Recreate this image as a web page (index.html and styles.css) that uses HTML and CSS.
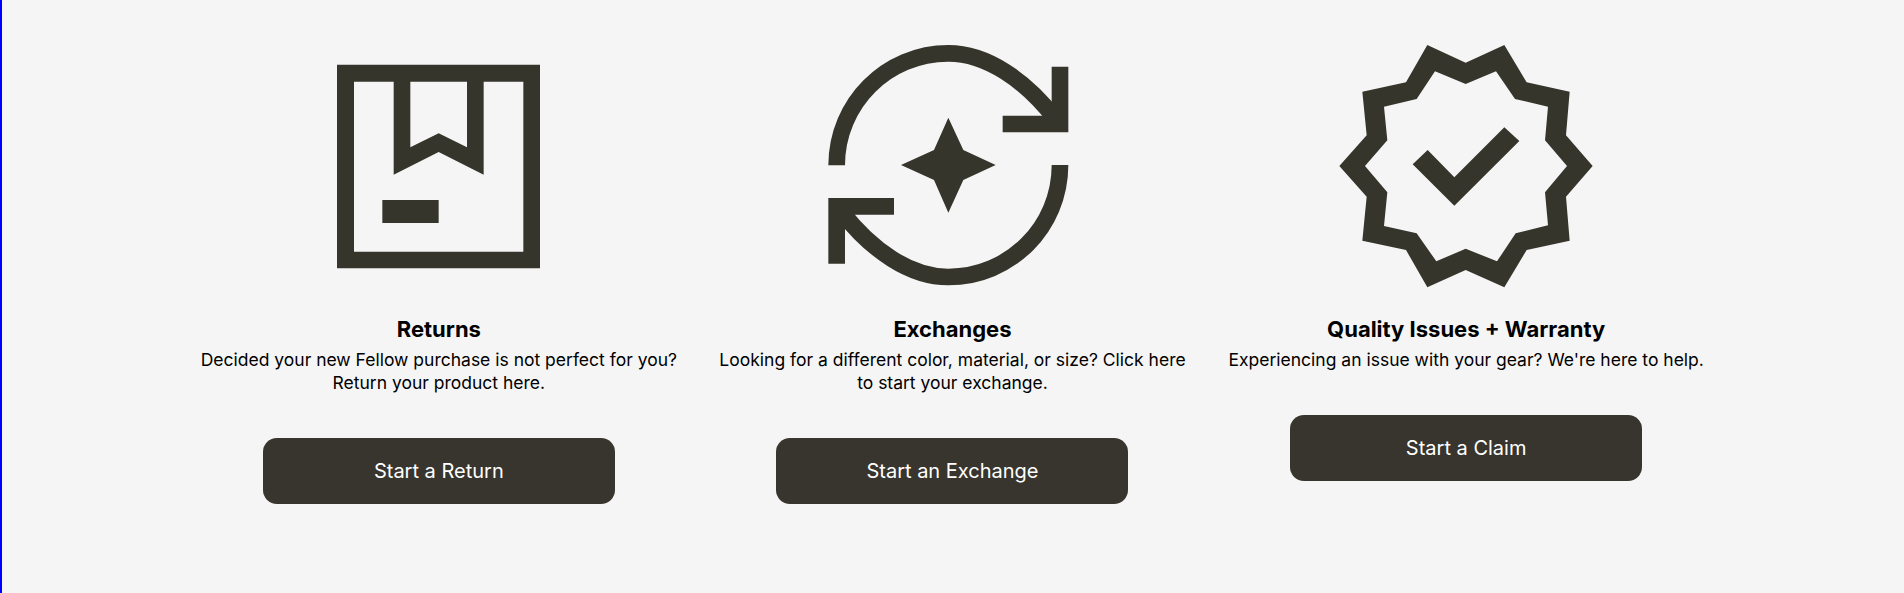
FILE: index.html
```html
<!DOCTYPE html>
<html lang="en">
<head>
    <meta charset="UTF-8">
    <meta name="viewport" content="width=device-width, initial-scale=1.0">
    <title>Returns and Exchanges</title>
    <link rel="stylesheet" href="styles.css">
</head>
<body>
    <main class="options">
        <section class="option">
            <svg class="icon" viewBox="9 0 816 816" aria-hidden="true">
                <path fill-rule="evenodd" d="M111 104H720V715H111ZM162 155V665H670V155H551V434L416 366L281 434V155ZM331 155V352L416 310L501 352V155Z"/>
                <path d="M247 510H416V579H247Z"/>
            </svg>
            <h2 class="title">Returns</h2>
            <p class="text">Decided your new Fellow purchase is not perfect for you? Return your product here.</p>
            <a class="button" href="#">Start a Return</a>
        </section>
        <section class="option">
            <svg class="icon" viewBox="48 0 816 816" aria-hidden="true">
                <path class="line" d="M110 406C110 220 260 70 445 70C560 70 675 150 765 265"/>
                <path class="line" d="M780 110V282H608"/>
                <path class="line" d="M780 405C780 591 630 741 445 741C330 741 215 661 125 546"/>
                <path class="line" d="M110 701V529H282"/>
                <path d="M445 263L490 360L587 405L490 450L445 548L402 450L303 405L402 360Z"/>
            </svg>
            <h2 class="title">Exchanges</h2>
            <p class="text">Looking for a different color, material, or size? Click here to start your exchange.</p>
            <a class="button" href="#">Start an Exchange</a>
        </section>
        <section class="option">
            <svg class="icon" viewBox="30 0 816 816" aria-hidden="true">
                <path fill-rule="evenodd" d="M322 45L437 98L553 45L620 157L749 185L738 316L818 408L738 500L749 632L620 660L553 772L437 720L322 772L258 660L127 632L140 500L58 408L140 316L127 185L258 157ZM345 124L290 207L192 230L202 331L135 408L202 487L192 588L290 610L349 694L437 656L531 694L587 610L684 586L675 487L741 408L675 331L684 230L585 207L528 124L437 162Z"/>
                <path d="M323 360L403 442L553 292L598 333L403 527L278 403Z"/>
            </svg>
            <h2 class="title">Quality Issues + Warranty</h2>
            <p class="text">Experiencing an issue with your gear? We're here to help.</p>
            <a class="button" href="#">Start a Claim</a>
        </section>
    </main>
</body>
</html>
```

FILE: styles.css
```css
body {
    margin: 0;
    min-height: 100vh;
    box-sizing: border-box;
    border-left: 2px solid #0000ff;
    background: #f5f5f5;
    color: #000;
    font-family: 'Inter', sans-serif;
    overflow: hidden;
}

.options {
    display: grid;
    grid-template-columns: repeat(3, 1fr);
    width: 1541px;
    margin-left: 180px;
    padding-top: 30px;
}

.option {
    display: flex;
    flex-direction: column;
    align-items: center;
    padding: 0 15px;
    text-align: center;
}

.icon {
    display: block;
    width: 272px;
    height: 272px;
    fill: #36352c;
}

.icon .line {
    fill: none;
    stroke: #36352c;
    stroke-width: 50;
}

.title {
    margin: 14px 0 6px;
    font-size: 22px;
    line-height: 26px;
    font-weight: 700;
}

.text {
    margin: 0 0 44px;
    font-size: 17.5px;
    line-height: 23px;
}

.button {
    display: flex;
    justify-content: center;
    align-items: center;
    width: 352px;
    height: 66px;
    border-radius: 14px;
    background: #38352e;
    color: #fff;
    font-size: 20px;
    text-decoration: none;
}
```
